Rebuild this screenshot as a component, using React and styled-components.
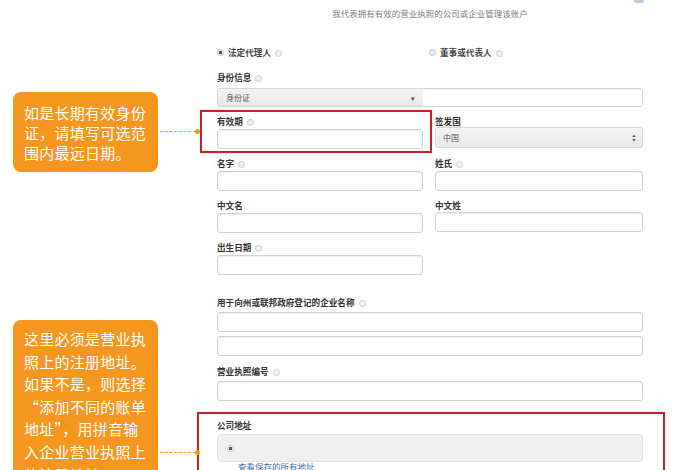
import React from "react";
import styled, { createGlobalStyle } from "styled-components";

const Global = createGlobalStyle`
  html, body { margin: 0; padding: 0; background: #fff; }
  body { font-family: "Noto Sans CJK SC", "Noto Sans", sans-serif; }
`;

const ORANGE = "#f5961f";
const RED = "#c0242c";

const Page = styled.div`
  position: relative;
  width: 700px;
  height: 470px;
  overflow: hidden;
  background: #fff;
`;

const Form = styled.div`
  margin-left: 217px;
  width: 426px;
  display: flex;
  flex-direction: column;
`;

const Header = styled.div`
  position: relative;
  height: 26px;
  display: flex;
  align-items: center;
  justify-content: center;
`;

const Subtitle = styled.div`
  font-size: 8.5px;
  color: #7a7a7a;
  line-height: 10px;
  white-space: nowrap;
`;

const TopMark = styled.span`
  position: absolute;
  right: -1px;
  top: 0;
  width: 10px;
  height: 3px;
  border-radius: 0 0 2px 2px;
  background: #b5cbe3;
`;

const Grid = styled.div`
  display: grid;
  grid-template-columns: 206px 208px;
  column-gap: 12px;
  row-gap: ${(p) => p.$rowGap || 8}px;
  margin-top: ${(p) => p.$mt || 0}px;
`;

const RadioItem = styled.div`
  display: flex;
  align-items: center;
  gap: 4px;
  height: 12px;
  font-size: 8.6px;
  font-weight: 600;
  color: #444;
  margin-left: ${(p) => p.$ml || 0}px;
`;

const Radio = styled.span`
  width: 7px;
  height: 7px;
  border-radius: 50%;
  border: 1px solid #c4c4c4;
  background: ${(p) => (p.$on ? "radial-gradient(circle, #555 0 1.6px, #f4f4f4 2px)" : "#ececec")};
  box-sizing: border-box;
  flex: none;
`;

const Help = styled.span`
  display: inline-block;
  width: 7px;
  height: 7px;
  border-radius: 50%;
  border: 1px solid #c9c9c9;
  background: #f3f3f3;
  margin-left: 4px;
  vertical-align: -1px;
  box-sizing: border-box;
`;

const Field = styled.div`
  display: flex;
  flex-direction: column;
  margin-top: ${(p) => p.$mt || 0}px;
`;

const Label = styled.div`
  font-size: 8.6px;
  font-weight: 700;
  color: #333;
  line-height: 12px;
  height: 12px;
  margin-bottom: ${(p) => p.$mb ?? 2}px;
  white-space: nowrap;
`;

const Input = styled.div`
  height: 20px;
  border: 1px solid #d2d2d2;
  border-radius: 3px;
  background: #fff;
  box-shadow: inset 0 1px 2px rgba(0, 0, 0, 0.07);
  box-sizing: border-box;
  margin-top: ${(p) => p.$mt || 0}px;
`;

const Select = styled.div`
  height: ${(p) => p.$h || 20}px;
  border: 1px solid #d4d4d4;
  border-radius: 3px;
  background: linear-gradient(#f3f3f3, #e9e9e9);
  box-sizing: border-box;
  display: flex;
  align-items: center;
  justify-content: space-between;
  padding: 0 6px 0 7px;
  font-size: 8px;
  color: #555;
`;

const Combo = styled.div`
  height: 19px;
  display: flex;
  border: 1px solid #d4d4d4;
  border-radius: 3px;
  overflow: hidden;
  box-sizing: border-box;
  margin-top: 5px;
`;

const ComboSelect = styled.div`
  width: 205px;
  background: linear-gradient(#f3f3f3, #e8e8e8);
  display: flex;
  align-items: center;
  justify-content: space-between;
  padding: 0 8px;
  box-sizing: border-box;
  font-size: 8px;
  color: #555;
`;

const ComboInput = styled.div`
  flex: 1;
  background: #fff;
  box-shadow: inset 0 1px 2px rgba(0, 0, 0, 0.06);
`;

const Arrow = styled.span`
  font-size: 7px;
  color: #444;
`;

const AddressBox = styled.div`
  height: 26px;
  margin-top: 3px;
  border: 1px solid #e4e4e4;
  border-radius: 3px;
  background: #efefef;
  display: flex;
  align-items: center;
  padding-left: 9px;
`;

const LinkText = styled.div`
  font-size: 8.5px;
  line-height: 9px;
  color: #3d6db3;
  margin-left: 21px;
`;

const Callout = styled.div`
  position: absolute;
  left: 13px;
  top: ${(p) => p.$top}px;
  width: 145px;
  height: ${(p) => p.$h}px;
  background: ${ORANGE};
  border-radius: 8px;
  box-sizing: border-box;
  padding: ${(p) => p.$pt}px 6px 0 11px;
  color: #fff;
  font-size: 15px;
  font-weight: 400;
  letter-spacing: 0.25px;
  line-height: ${(p) => p.$lh}px;
  white-space: nowrap;
`;

const Connector = styled.div`
  position: absolute;
  left: 160px;
  top: ${(p) => p.$top}px;
  width: 36px;
  border-top: 1.5px dashed ${ORANGE};
`;

const Dot = styled.span`
  position: absolute;
  right: -4px;
  top: -3.5px;
  width: 5px;
  height: 5px;
  border-radius: 50%;
  background: ${ORANGE};
`;

const Highlight = styled.div`
  position: absolute;
  left: ${(p) => p.$x}px;
  top: ${(p) => p.$y}px;
  width: ${(p) => p.$w}px;
  height: ${(p) => p.$h}px;
  border: 2px solid ${RED};
  box-sizing: border-box;
  box-shadow: 0 0 1px rgba(220, 60, 60, 0.5);
`;

function UpDownIcon() {
  return (
    <svg width="4" height="8" viewBox="0 0 4 8">
      <path d="M2 0.5 L3.6 3 L0.4 3 Z M2 7.5 L3.6 5 L0.4 5 Z" fill="#444" />
    </svg>
  );
}

export default function App() {
  return (
    <Page>
      <Global />
      <Form>
        <Header>
          <Subtitle>我代表拥有有效的营业执照的公司或企业管理该账户</Subtitle>
          <TopMark />
        </Header>

        <Grid $mt={20}>
          <RadioItem>
            <Radio $on />
            <span>法定代理人<Help /></span>
          </RadioItem>
          <RadioItem $ml={-6}>
            <Radio />
            <span>董事或代表人<Help /></span>
          </RadioItem>
        </Grid>

        <Field $mt={13}>
          <Label $mb={0}>身份信息<Help /></Label>
          <Combo>
            <ComboSelect>
              <span>身份证</span>
              <Arrow>▾</Arrow>
            </ComboSelect>
            <ComboInput />
          </Combo>
        </Field>

        <Grid $mt={8}>
          <Field>
            <Label>有效期<Help /></Label>
            <Input />
          </Field>
          <Field>
            <Label $mb={0}>签发国</Label>
            <Select $h={21}>
              <span>中国</span>
              <UpDownIcon />
            </Select>
          </Field>
          <Field>
            <Label>名字<Help /></Label>
            <Input />
          </Field>
          <Field>
            <Label>姓氏<Help /></Label>
            <Input />
          </Field>
          <Field>
            <Label>中文名</Label>
            <Input />
          </Field>
          <Field>
            <Label $mb={1}>中文姓</Label>
            <Input />
          </Field>
          <Field>
            <Label>出生日期<Help /></Label>
            <Input />
          </Field>
        </Grid>

        <Field $mt={21}>
          <Label $mb={4}>用于向州或联邦政府登记的企业名称<Help /></Label>
          <Input />
          <Input $mt={4} />
        </Field>

        <Field $mt={9}>
          <Label $mb={4}>营业执照编号<Help /></Label>
          <Input />
        </Field>

        <Field $mt={18}>
          <Label $mb={0}>公司地址</Label>
          <AddressBox>
            <Radio $on />
          </AddressBox>
          <LinkText>查看保存的所有地址</LinkText>
        </Field>
      </Form>

      <Highlight $x={200} $y={110} $w={232} $h={43} />
      <Highlight $x={197} $y={412} $w={468} $h={80} />

      <Callout $top={92} $h={80} $pt={11} $lh={20}>
        如是长期有效身份<br />证，请填写可选范<br />围内最远日期。
      </Callout>
      <Connector $top={131}><Dot /></Connector>

      <Callout $top={320} $h={170} $pt={8} $lh={22.6}>
        这里必须是营业执<br />照上的注册地址。<br />如果不是，则选择<br />“添加不同的账单<br />地址”，用拼音输<br />入企业营业执照上<br />的注册地址。
      </Callout>
      <Connector $top={452}><Dot /></Connector>
    </Page>
  );
}
